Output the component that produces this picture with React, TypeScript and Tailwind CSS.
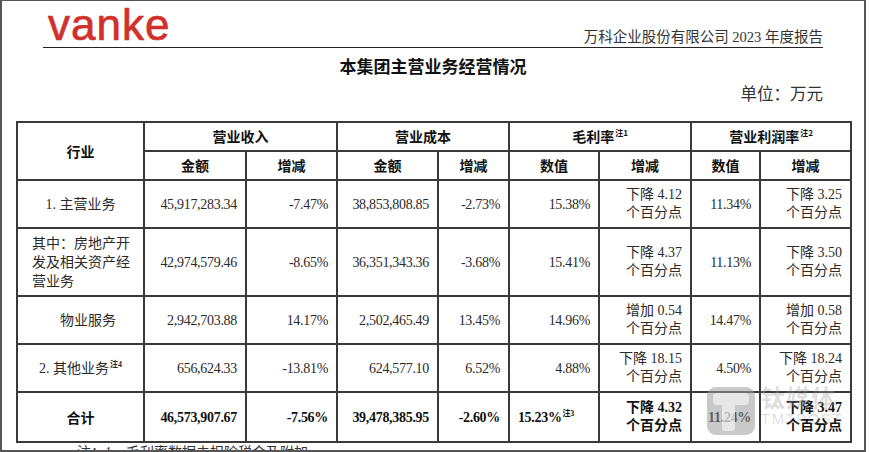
import React from "react";

/* 万科 2023 年报 – 本集团主营业务经营情况 */

const cell = "border-2 border-[#3a3a3a] align-middle";
const num = `${cell} text-right pr-2 tracking-[-0.3px]`;

function Note({ n }: { n: string }) {
  return (
    <span className="relative -top-[6px] ml-[1px] text-[8px] leading-none font-bold">
      注{n}
    </span>
  );
}

function Change({ a, b, bold }: { a: string; b?: string; bold?: boolean }) {
  return (
    <td className={`${cell} text-right pr-2 leading-[18px] ${bold ? "font-bold text-[#111]" : ""}`}>
      {a}
      <br />
      {b ?? "个百分点"}
    </td>
  );
}

interface Row {
  label: React.ReactNode;
  labelClass: string;
  rev: string;
  revChg: string;
  cost: string;
  costChg: string;
  gm: React.ReactNode;
  gmChg: string;
  op: string;
  opChg: string;
  h: string;
}

const rows: Row[] = [
  {
    label: "1. 主营业务",
    labelClass: "text-center",
    rev: "45,917,283.34",
    revChg: "-7.47%",
    cost: "38,853,808.85",
    costChg: "-2.73%",
    gm: "15.38%",
    gmChg: "下降 4.12",
    op: "11.34%",
    opChg: "下降 3.25",
    h: "h-[48px]",
  },
  {
    label: (
      <>
        其中：房地产开
        <br />
        发及相关资产经
        <br />
        营业务
      </>
    ),
    labelClass: "text-left pl-[14px] leading-[19px]",
    rev: "42,974,579.46",
    revChg: "-8.65%",
    cost: "36,351,343.36",
    costChg: "-3.68%",
    gm: "15.41%",
    gmChg: "下降 4.37",
    op: "11.13%",
    opChg: "下降 3.50",
    h: "h-[68px]",
  },
  {
    label: "物业服务",
    labelClass: "text-left pl-[42px]",
    rev: "2,942,703.88",
    revChg: "14.17%",
    cost: "2,502,465.49",
    costChg: "13.45%",
    gm: "14.96%",
    gmChg: "增加 0.54",
    op: "14.47%",
    opChg: "增加 0.58",
    h: "h-[48px]",
  },
  {
    label: (
      <>
        2. 其他业务
        <Note n="4" />
      </>
    ),
    labelClass: "text-center",
    rev: "656,624.33",
    revChg: "-13.81%",
    cost: "624,577.10",
    costChg: "6.52%",
    gm: "4.88%",
    gmChg: "下降 18.15",
    op: "4.50%",
    opChg: "下降 18.24",
    h: "h-[48px]",
  },
];

function Watermark() {
  return (
    <div className="absolute left-[707px] top-[387px] flex items-start gap-[6px] pointer-events-none">
      <div className="w-[48px] h-[48px] rounded-[9px] bg-[#9c9c9c]/55 relative">
        <svg width="48" height="48" viewBox="0 0 48 48" className="absolute inset-0">
          <path
            d="M6 9 Q6 6 9 6 L38 6 Q42 6 42 10 L42 14 Q42 18 38 18 L28 18 L28 41 Q28 44 25 44 L18 44 Q15 44 15 41 L15 18 L9 18 Q6 18 6 15 Z"
            fill="#ffffff"
            fillOpacity="0.55"
          />
        </svg>
      </div>
      <div className="flex flex-col -mt-[3px]">
        <span className="font-['Noto_Sans_CJK_SC',sans-serif] font-bold text-[24px] leading-[26px] text-[#a0a0a0]/35 tracking-[1px]">
          钛媒体
        </span>
        <span className="font-['Liberation_Sans',sans-serif] text-[15px] leading-[18px] text-[#a0a0a0]/35 tracking-[1.5px]">
          TMTPOST
        </span>
      </div>
    </div>
  );
}

export default function App() {
  return (
    <div className="w-[870px] h-[452px] bg-white relative overflow-hidden font-['Liberation_Serif','Noto_Sans_CJK_SC',serif] text-[#222]">
      <div className="w-[866px] h-[452px] border-l-2 border-t border-r-2 border-b-2 border-[#555] overflow-hidden">
        {/* Page header */}
        <div className="ml-[41px] w-[780px] h-[47px] flex justify-between border-b-[1.5px] border-[#222]">
          <span className="font-['Liberation_Sans',sans-serif] text-[44px] leading-[44px] h-[44px] text-[#d2302c] tracking-[1px] [-webkit-text-stroke:0.7px_#d2302c] ml-[5px] mt-[2px]">
            vanke
          </span>
          <span className="self-end text-[14.5px] leading-none mb-[3px] text-[#333]">
            万科企业股份有限公司 2023 年度报告
          </span>
        </div>

        {/* Title */}
        <div className="mt-[8px] text-center text-[17px] leading-[20px] font-bold text-[#111] font-['Noto_Sans_CJK_SC',sans-serif]">
          本集团主营业务经营情况
        </div>
        <div className="ml-[41px] w-[780px] mt-[9px] text-right text-[16.5px] leading-[20px] text-[#333]">
          单位：万元
        </div>

        {/* Table */}
        <div className="ml-[14px] mt-[16px] w-[834px] text-[14px]">
          <table className="w-[834px] table-fixed border-collapse">
            <colgroup>
              <col className="w-[127px]" />
              <col className="w-[102px]" />
              <col className="w-[91px]" />
              <col className="w-[101px]" />
              <col className="w-[71px]" />
              <col className="w-[90px]" />
              <col className="w-[92px]" />
              <col className="w-[69px]" />
              <col className="w-[91px]" />
            </colgroup>
            <thead className="font-bold text-[#111] font-['Noto_Sans_CJK_SC',sans-serif]">
              <tr className="h-[29px]">
                <th rowSpan={2} className={`${cell} text-center`}>
                  行业
                </th>
                <th colSpan={2} className={`${cell} text-center`}>
                  营业收入
                </th>
                <th colSpan={2} className={`${cell} text-center`}>
                  营业成本
                </th>
                <th colSpan={2} className={`${cell} text-center`}>
                  毛利率
                  <Note n="1" />
                </th>
                <th colSpan={2} className={`${cell} text-center`}>
                  营业利润率
                  <Note n="2" />
                </th>
              </tr>
              <tr className="h-[29px]">
                <th className={`${cell} text-center`}>金额</th>
                <th className={`${cell} text-center`}>增减</th>
                <th className={`${cell} text-center`}>金额</th>
                <th className={`${cell} text-center`}>增减</th>
                <th className={`${cell} text-center`}>数值</th>
                <th className={`${cell} text-center`}>增减</th>
                <th className={`${cell} text-center`}>数值</th>
                <th className={`${cell} text-center`}>增减</th>
              </tr>
            </thead>
            <tbody className="text-[#2a2a2a]">
              {rows.map((r, i) => (
                <tr key={i} className={r.h}>
                  <td className={`${cell} ${r.labelClass}`}>{r.label}</td>
                  <td className={num}>{r.rev}</td>
                  <td className={num}>{r.revChg}</td>
                  <td className={num}>{r.cost}</td>
                  <td className={num}>{r.costChg}</td>
                  <td className={num}>{r.gm}</td>
                  <Change a={r.gmChg} />
                  <td className={num}>{r.op}</td>
                  <Change a={r.opChg} />
                </tr>
              ))}
              <tr className="h-[50px] font-bold text-[#111]">
                <td className={`${cell} text-center font-['Noto_Sans_CJK_SC',sans-serif]`}>合计</td>
                <td className={num}>46,573,907.67</td>
                <td className={num}>-7.56%</td>
                <td className={num}>39,478,385.95</td>
                <td className={num}>-2.60%</td>
                <td className={`${cell} text-right pr-[24px] tracking-[-0.3px]`}>
                  15.23%
                  <Note n="3" />
                </td>
                <Change a="下降 4.32" bold />
                <td className={num}>11.24%</td>
                <Change a="下降 3.47" bold />
              </tr>
            </tbody>
          </table>
          <div className="mt-[2px] pl-[61px] text-[14px] leading-[16px] text-[#333]">
            注：1、毛利率数据未扣除税金及附加
          </div>
        </div>
      </div>
      <Watermark />
    </div>
  );
}
